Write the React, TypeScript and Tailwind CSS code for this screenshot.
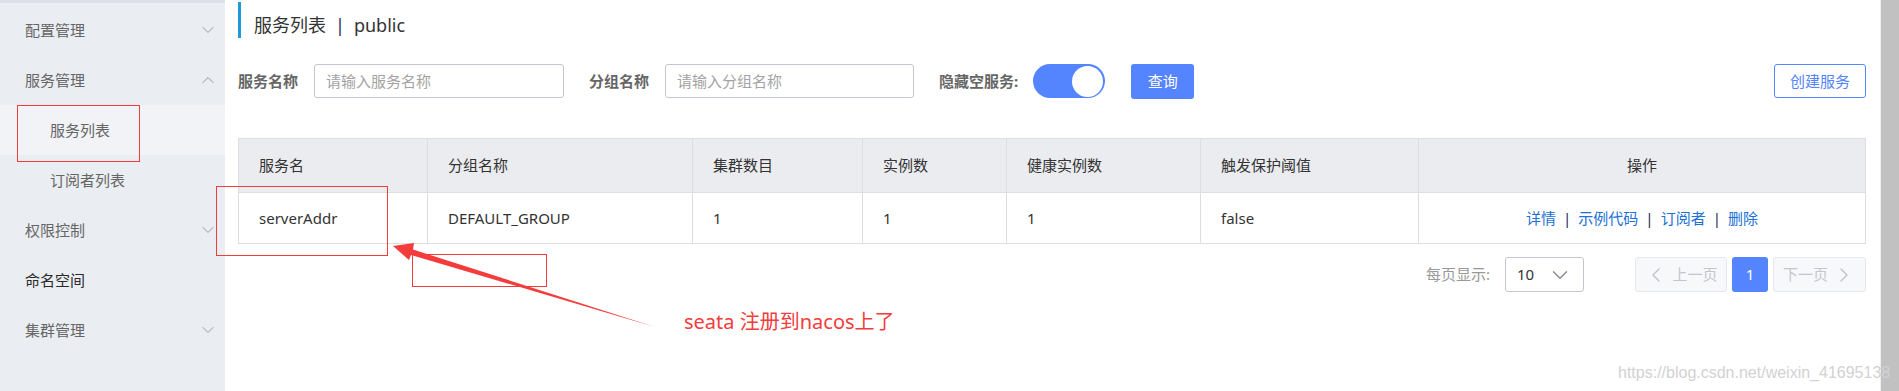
import { ChevronDown, ChevronUp, ChevronLeft, ChevronRight } from 'lucide-react';

const menu = [
  { label: '配置管理', icon: 'down' },
  { label: '服务管理', icon: 'up' },
  { label: '服务列表', sub: true, active: true },
  { label: '订阅者列表', sub: true },
  { label: '权限控制', icon: 'down' },
  { label: '命名空间', dark: true },
  { label: '集群管理', icon: 'down' },
];

const columns = [
  { title: '服务名', width: 'w-[189px]' },
  { title: '分组名称', width: 'w-[265px]' },
  { title: '集群数目', width: 'w-[170px]' },
  { title: '实例数', width: 'w-[144px]' },
  { title: '健康实例数', width: 'w-[194px]' },
  { title: '触发保护阈值', width: 'w-[218px]' },
  { title: '操作', width: 'w-[447px]', center: true },
];

const row = ['serverAddr', 'DEFAULT_GROUP', '1', '1', '1', 'false'];
const actions = ['详情', '示例代码', '订阅者', '删除'];

export default function App() {
  return (
    <div
      className="relative flex w-[1899px] h-[391px] overflow-hidden bg-white text-[#333]"
      style={{ fontFamily: '"Noto Sans", "Noto Sans CJK SC", sans-serif' }}
    >
      {/* Sidebar */}
      <aside className="w-[225px] shrink-0 bg-[#eaedf1] border-t-[3px] border-[#dde0e6] pt-[2px]">
        {menu.map((item) => (
          <div
            key={item.label}
            className={`flex items-center justify-between h-[50px] text-[15px] leading-none pr-[7px] ${
              item.sub ? 'pl-[50px]' : 'pl-[25px]'
            } ${item.active ? 'bg-[#f2f3f7]' : ''} ${item.dark ? 'text-[#2a2a2a]' : 'text-[#666]'}`}
          >
            <span>{item.label}</span>
            {item.icon === 'down' && <ChevronDown size={20} strokeWidth={1.2} className="text-[#999]" />}
            {item.icon === 'up' && <ChevronUp size={20} strokeWidth={1.2} className="text-[#999]" />}
          </div>
        ))}
      </aside>

      {/* Main */}
      <main className="flex-1 pl-[13px] pr-[14px] pt-[2px]">
        <div className="flex items-center h-[36px] pt-[9px] border-l-[3px] border-[#1e9ad8] pl-[13px] text-[18px] leading-none text-[#333]">
          服务列表<span className="mx-[9px] text-[#1d2a5a]">|</span>public
        </div>

        {/* Filters */}
        <div className="flex items-center h-[34px] mt-[26px] text-[15px]">
          <span className="font-bold text-[#666]">服务名称</span>
          <div className="ml-[16px] w-[250px] h-[34px] flex items-center border border-[#c4c6cf] rounded-[3px] pl-[11px] text-[#a3a3a3]">
            请输入服务名称
          </div>
          <span className="ml-[25px] font-bold text-[#666]">分组名称</span>
          <div className="ml-[16px] w-[249px] h-[34px] flex items-center border border-[#c4c6cf] rounded-[3px] pl-[11px] text-[#a3a3a3]">
            请输入分组名称
          </div>
          <span className="ml-[25px] font-bold text-[#666]">隐藏空服务:</span>
          <div className="ml-[15px] w-[72px] h-[34px] rounded-full bg-[#5584ff] flex items-center justify-end pr-[2px]">
            <div className="w-[31px] h-[31px] rounded-full bg-white" />
          </div>
          <div className="ml-[26px] w-[63px] h-[35px] rounded-[3px] bg-[#5584ff] text-white flex items-center justify-center">
            查询
          </div>
          <div className="ml-auto w-[92px] h-[34px] rounded-[3px] border border-[#5584ff] text-[#5584ff] flex items-center justify-center">
            创建服务
          </div>
        </div>

        {/* Table */}
        <table className="mt-[40px] w-[1628px] table-fixed border-collapse text-[15px]">
          <thead>
            <tr className="h-[54px] bg-[#ebecf0]">
              {columns.map((c) => (
                <th
                  key={c.title}
                  className={`${c.width} border border-[#dcdee3] font-normal text-[#333] ${
                    c.center ? 'text-center' : 'text-left pl-[20px]'
                  }`}
                >
                  {c.title}
                </th>
              ))}
            </tr>
          </thead>
          <tbody>
            <tr className="h-[51px]">
              {row.map((v, i) => (
                <td key={i} className="border border-[#dcdee3] pl-[20px] text-[#333]">
                  {v}
                </td>
              ))}
              <td className="border border-[#dcdee3] text-center">
                {actions.map((a, i) => (
                  <span key={a}>
                    <span className="text-[#2170d6]">{a}</span>
                    {i < actions.length - 1 && <span className="mx-[7px] text-[#1d2a5a]">|</span>}
                  </span>
                ))}
              </td>
            </tr>
          </tbody>
        </table>

        {/* Pagination */}
        <div className="flex items-center justify-end mt-[13px] w-[1628px] text-[15px]">
          <span className="text-[#999]">每页显示:</span>
          <div className="ml-[15px] w-[79px] h-[35px] border border-[#c4c6cf] rounded-[3px] flex items-center justify-between pl-[11px] pr-[10px]">
            <span className="text-[#333]">10</span>
            <ChevronDown size={26} strokeWidth={1.3} className="text-[#888]" />
          </div>
          <div className="ml-[51px] w-[92px] h-[35px] border border-[#e6e7eb] bg-[#f7f8fa] rounded-[3px] flex items-center justify-center gap-[4px] text-[#c4c6cf]">
            <ChevronLeft size={24} strokeWidth={1.5} />
            上一页
          </div>
          <div className="ml-[5px] w-[36px] h-[35px] bg-[#5584ff] rounded-[3px] flex items-center justify-center text-white">
            1
          </div>
          <div className="ml-[5px] w-[93px] h-[35px] border border-[#e6e7eb] bg-[#f7f8fa] rounded-[3px] flex items-center justify-center gap-[4px] text-[#c4c6cf]">
            下一页
            <ChevronRight size={24} strokeWidth={1.5} />
          </div>
        </div>
      </main>

      {/* Scrollbar */}
      <div className="w-[20px] shrink-0 border-l border-[#eeeeee] bg-[#c1c1c1]" />

      {/* Annotations */}
      <div className="absolute left-[17px] top-[105px] w-[123px] h-[57px] border border-[#f03c3c]" />
      <div className="absolute left-[216px] top-[186px] w-[172px] h-[70px] border border-[#f03c3c]" />
      <div className="absolute left-[412px] top-[254px] w-[135px] h-[33px] border border-[#f03c3c]" />
      <svg className="absolute left-0 top-0" width="1899" height="391" viewBox="0 0 1899 391">
        <polygon
          points="393,246 414,243 413,249.5 655,327 411,255 409,260"
          fill="#f53c3c"
        />
      </svg>
      <div className="absolute left-[684px] top-[309px] text-[20px] leading-[26px] text-[#f33c3c]">
        seata 注册到nacos上了
      </div>
      <div
        className="absolute left-[1618px] top-[362px] text-[16px] leading-[22px] text-[#d2d2d2]"
        style={{ fontFamily: '"Liberation Sans", Arial, sans-serif' }}
      >
        https://blog.csdn.net/weixin_41695138
      </div>
    </div>
  );
}
